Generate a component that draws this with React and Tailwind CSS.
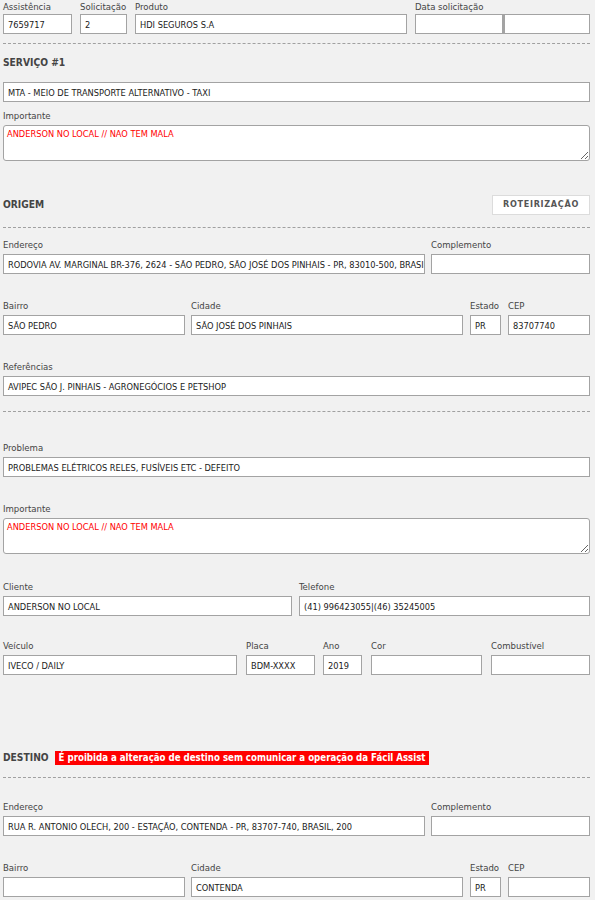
import React from "react";

const FONT = { fontFamily: "'DejaVu Sans Condensed', 'DejaVu Sans', sans-serif" };

function Input({ value = "", w, className = "" }) {
  return (
    <div
      className={`h-[20px] border border-[#a3a3a3] bg-white px-[4px] pt-[1px] flex items-center text-[9.2px] text-[#1a1a1a] whitespace-nowrap overflow-hidden font-stretch-condensed ${className}`}
      style={{ width: w }}
    >
      {value}
    </div>
  );
}

function Field({ label, value, w, first = false }) {
  return (
    <div className="flex flex-col shrink-0" style={{ width: w }}>
      <div
        className={`text-[9.5px] text-[#444] whitespace-nowrap font-stretch-condensed ${
          first ? "leading-[13px] mb-[1px]" : "leading-[14px] mb-[2px]"
        }`}
      >
        {label}
      </div>
      <Input value={value} w={w} />
    </div>
  );
}

function TextArea({ label, value }) {
  return (
    <div className="flex flex-col">
      <div className="text-[9.5px] leading-[14px] mb-[2px] text-[#444] font-stretch-condensed">{label}</div>
      <textarea
        readOnly
        defaultValue={value}
        className="h-[36px] w-full border border-[#a3a3a3] rounded-[3px] bg-white px-[3px] pt-[2px] text-[9.2px] leading-[12px] text-[#ff0000] outline-none font-stretch-condensed"
        style={FONT}
      />
    </div>
  );
}

function Dashed({ className = "" }) {
  return <div className={`border-t border-dashed border-[#a0a0a0] ${className}`} />;
}

export default function App() {
  return (
    <div className="min-h-[900px] w-[595px] bg-[#f1f1f1] overflow-hidden" style={FONT}>
      <div className="ml-[3px] w-[587px] flex flex-col">
        {/* Row 1 */}
        <div className="flex">
          <Field first label="Assistência" value="7659717" w={69} />
          <div className="ml-[8px]">
            <Field first label="Solicitação" value="2" w={47} />
          </div>
          <div className="ml-[8px]">
            <Field first label="Produto" value="HDI SEGUROS S.A" w={272} />
          </div>
          <div className="ml-[8px] flex flex-col">
            <div className="text-[9.5px] leading-[13px] mb-[1px] text-[#444] font-stretch-condensed">Data solicitação</div>
            <div className="flex">
              <Input w={88} />
              <Input w={87} className="border-l-2" />
            </div>
          </div>
        </div>

        <Dashed className="mt-[9px]" />

        <div className="mt-[12px] h-[14px] leading-[14px] text-[10.2px] font-bold text-[#444] font-stretch-condensed">
          SERVIÇO #1
        </div>

        <div className="mt-[12px]">
          <Input value="MTA - MEIO DE TRANSPORTE ALTERNATIVO - TAXI" w={587} />
        </div>

        <div className="mt-[7px]">
          <TextArea label="Importante" value="ANDERSON NO LOCAL // NAO TEM MALA" />
        </div>

        {/* ORIGEM */}
        <div className="mt-[34px] flex items-center justify-between h-[20px]">
          <div className="text-[10.2px] font-bold text-[#444] font-stretch-condensed">ORIGEM</div>
          <div className="w-[98px] h-[20px] border border-[#dcdcdc] bg-white flex items-center justify-center text-[9px] font-bold tracking-[0.7px] text-[#555]">
            ROTEIRIZAÇÃO
          </div>
        </div>

        <Dashed className="mt-[12px]" />

        <div className="mt-[10px] flex gap-[6px]">
          <Field
            label="Endereço"
            value="RODOVIA AV. MARGINAL BR-376, 2624 - SÃO PEDRO, SÃO JOSÉ DOS PINHAIS - PR, 83010-500, BRASIL"
            w={422}
          />
          <Field label="Complemento" value="" w={159} />
        </div>

        <div className="mt-[25px] flex">
          <Field label="Bairro" value="SÃO PEDRO" w={182} />
          <div className="ml-[6px]">
            <Field label="Cidade" value="SÃO JOSÉ DOS PINHAIS" w={272} />
          </div>
          <div className="ml-[7px]">
            <Field label="Estado" value="PR" w={31} />
          </div>
          <div className="ml-[7px]">
            <Field label="CEP" value="83707740" w={82} />
          </div>
        </div>

        <div className="mt-[25px]">
          <Field label="Referências" value="AVIPEC SÃO J. PINHAIS - AGRONEGÓCIOS E PETSHOP" w={587} />
        </div>

        <Dashed className="mt-[15px]" />

        <div className="mt-[29px]">
          <Field label="Problema" value="PROBLEMAS ELÉTRICOS RELES, FUSÍVEIS ETC - DEFEITO" w={587} />
        </div>

        <div className="mt-[25px]">
          <TextArea label="Importante" value="ANDERSON NO LOCAL // NAO TEM MALA" />
        </div>

        <div className="mt-[26px] flex gap-[7px]">
          <Field label="Cliente" value="ANDERSON NO LOCAL" w={289} />
          <Field label="Telefone" value="(41) 996423055|(46) 35245005" w={291} />
        </div>

        <div className="mt-[23px] flex">
          <Field label="Veículo" value="IVECO / DAILY" w={234} />
          <div className="ml-[9px]">
            <Field label="Placa" value="BDM-XXXX" w={69} />
          </div>
          <div className="ml-[8px]">
            <Field label="Ano" value="2019" w={39} />
          </div>
          <div className="ml-[9px]">
            <Field label="Cor" value="" w={111} />
          </div>
          <div className="ml-[9px]">
            <Field label="Combustível" value="" w={99} />
          </div>
        </div>

        {/* DESTINO */}
        <div className="mt-[75px] flex items-center h-[15px]">
          <div className="text-[10.2px] font-bold text-[#444] font-stretch-condensed">DESTINO</div>
          <div className="ml-[6px] bg-[#ff0000] text-white font-bold text-[9.6px] leading-[14px] px-[4px] font-stretch-condensed whitespace-nowrap">
            É proibida a alteração de destino sem comunicar a operação da Fácil Assist
          </div>
        </div>

        <Dashed className="mt-[12px]" />

        <div className="mt-[22px] flex gap-[6px]">
          <Field
            label="Endereço"
            value="RUA R. ANTONIO OLECH, 200 - ESTAÇÃO, CONTENDA - PR, 83707-740, BRASIL, 200"
            w={422}
          />
          <Field label="Complemento" value="" w={159} />
        </div>

        <div className="mt-[25px] flex">
          <Field label="Bairro" value="" w={182} />
          <div className="ml-[6px]">
            <Field label="Cidade" value="CONTENDA" w={272} />
          </div>
          <div className="ml-[7px]">
            <Field label="Estado" value="PR" w={31} />
          </div>
          <div className="ml-[7px]">
            <Field label="CEP" value="" w={82} />
          </div>
        </div>
      </div>
    </div>
  );
}
